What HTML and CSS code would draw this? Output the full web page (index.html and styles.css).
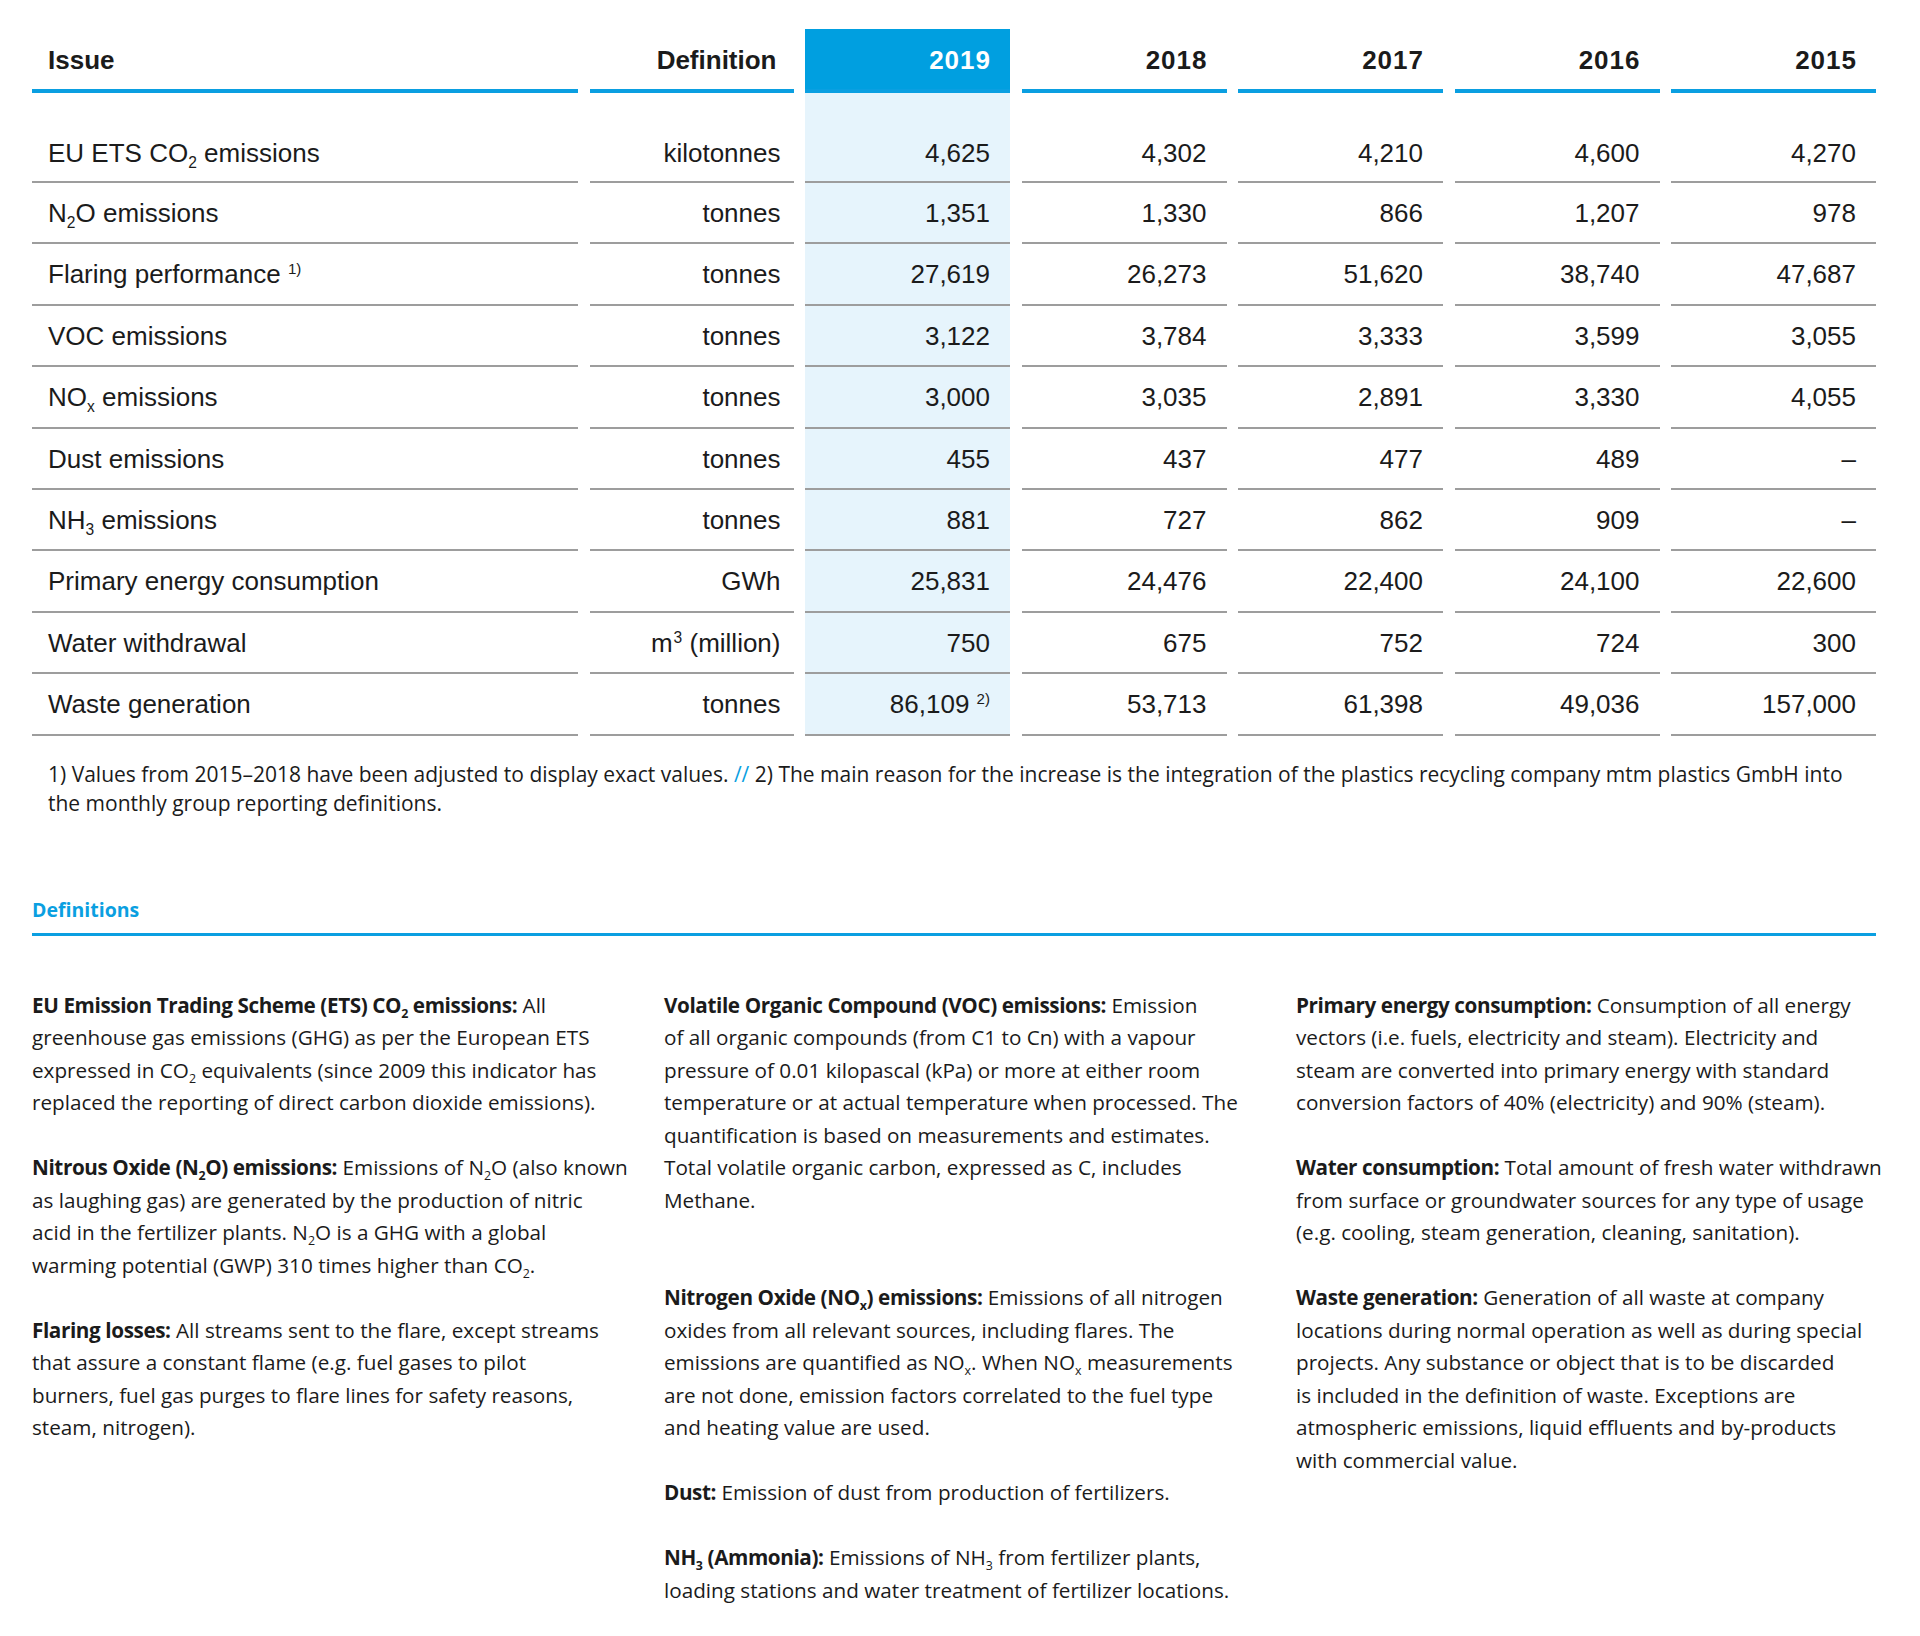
FILE: index.html
```html
<!DOCTYPE html>
<html lang="en">
<head>
<meta charset="utf-8">
<title>Environmental indicators</title>
<link rel="stylesheet" href="styles.css">
</head>
<body>
<div class="page">
  <div class="kpi">
    <div class="tr head">
      <div class="c issue">Issue</div>
      <div class="c def">Definition</div>
      <div class="c yr hl">2019</div>
      <div class="c yr">2018</div>
      <div class="c yr">2017</div>
      <div class="c yr">2016</div>
      <div class="c yr">2015</div>
    </div>
    <div class="tr first">
      <div class="c issue">EU ETS CO<span class="sub">2</span> emissions</div>
      <div class="c def">kilotonnes</div>
      <div class="c yr hl">4,625</div>
      <div class="c yr">4,302</div>
      <div class="c yr">4,210</div>
      <div class="c yr">4,600</div>
      <div class="c yr">4,270</div>
    </div>
    <div class="tr">
      <div class="c issue">N<span class="sub">2</span>O emissions</div>
      <div class="c def">tonnes</div>
      <div class="c yr hl">1,351</div>
      <div class="c yr">1,330</div>
      <div class="c yr">866</div>
      <div class="c yr">1,207</div>
      <div class="c yr">978</div>
    </div>
    <div class="tr">
      <div class="c issue">Flaring performance <span class="sup">1)</span></div>
      <div class="c def">tonnes</div>
      <div class="c yr hl">27,619</div>
      <div class="c yr">26,273</div>
      <div class="c yr">51,620</div>
      <div class="c yr">38,740</div>
      <div class="c yr">47,687</div>
    </div>
    <div class="tr">
      <div class="c issue">VOC emissions</div>
      <div class="c def">tonnes</div>
      <div class="c yr hl">3,122</div>
      <div class="c yr">3,784</div>
      <div class="c yr">3,333</div>
      <div class="c yr">3,599</div>
      <div class="c yr">3,055</div>
    </div>
    <div class="tr">
      <div class="c issue">NO<span class="sub">x</span> emissions</div>
      <div class="c def">tonnes</div>
      <div class="c yr hl">3,000</div>
      <div class="c yr">3,035</div>
      <div class="c yr">2,891</div>
      <div class="c yr">3,330</div>
      <div class="c yr">4,055</div>
    </div>
    <div class="tr">
      <div class="c issue">Dust emissions</div>
      <div class="c def">tonnes</div>
      <div class="c yr hl">455</div>
      <div class="c yr">437</div>
      <div class="c yr">477</div>
      <div class="c yr">489</div>
      <div class="c yr">–</div>
    </div>
    <div class="tr">
      <div class="c issue">NH<span class="sub">3</span> emissions</div>
      <div class="c def">tonnes</div>
      <div class="c yr hl">881</div>
      <div class="c yr">727</div>
      <div class="c yr">862</div>
      <div class="c yr">909</div>
      <div class="c yr">–</div>
    </div>
    <div class="tr">
      <div class="c issue">Primary energy consumption</div>
      <div class="c def">GWh</div>
      <div class="c yr hl">25,831</div>
      <div class="c yr">24,476</div>
      <div class="c yr">22,400</div>
      <div class="c yr">24,100</div>
      <div class="c yr">22,600</div>
    </div>
    <div class="tr">
      <div class="c issue">Water withdrawal</div>
      <div class="c def">m<span class="sup3">3</span> (million)</div>
      <div class="c yr hl">750</div>
      <div class="c yr">675</div>
      <div class="c yr">752</div>
      <div class="c yr">724</div>
      <div class="c yr">300</div>
    </div>
    <div class="tr">
      <div class="c issue">Waste generation</div>
      <div class="c def">tonnes</div>
      <div class="c yr hl">86,109 <span class="sup">2)</span></div>
      <div class="c yr">53,713</div>
      <div class="c yr">61,398</div>
      <div class="c yr">49,036</div>
      <div class="c yr">157,000</div>
    </div>
  </div>

  <p class="footnote">1) Values from 2015–2018 have been adjusted to display exact values. <span class="sep">//</span> 2) The main reason for the increase is the integration of the plastics recycling company mtm plastics GmbH into<br>the monthly group reporting definitions.</p>

  <h2 class="def-title">Definitions</h2>

  <div class="def-grid">
    <div class="def-col">
      <p><b>EU Emission Trading Scheme (ETS) CO<span class="sub">2</span> emissions:</b> All<br>greenhouse gas emissions (GHG) as per the European ETS<br>expressed in CO<span class="sub">2</span> equivalents (since 2009 this indicator has<br>replaced the reporting of direct carbon dioxide emissions).</p>
      <p><b>Nitrous Oxide (N<span class="sub">2</span>O) emissions:</b> Emissions of N<span class="sub">2</span>O (also known<br>as laughing gas) are generated by the production of nitric<br>acid in the fertilizer plants. N<span class="sub">2</span>O is a GHG with a global<br>warming potential (GWP) 310 times higher than CO<span class="sub">2</span>.</p>
      <p><b>Flaring losses:</b> All streams sent to the flare, except streams<br>that assure a constant flame (e.g. fuel gases to pilot<br>burners, fuel gas purges to flare lines for safety reasons,<br>steam, nitrogen).</p>
    </div>
    <div class="def-col">
      <p><b>Volatile Organic Compound (VOC) emissions:</b> Emission<br>of all organic compounds (from C1 to Cn) with a vapour<br>pressure of 0.01 kilopascal (kPa) or more at either room<br>temperature or at actual temperature when processed. The<br>quantification is based on measurements and estimates.<br>Total volatile organic carbon, expressed as C, includes<br>Methane.</p>
      <p class="wide-gap"><b>Nitrogen Oxide (NO<span class="sub">x</span>) emissions:</b> Emissions of all nitrogen<br>oxides from all relevant sources, including flares. The<br>emissions are quantified as NO<span class="sub">x</span>. When NO<span class="sub">x</span> measurements<br>are not done, emission factors correlated to the fuel type<br>and heating value are used.</p>
      <p><b>Dust:</b> Emission of dust from production of fertilizers.</p>
      <p><b>NH<span class="sub">3</span> (Ammonia):</b> Emissions of NH<span class="sub">3</span> from fertilizer plants,<br>loading stations and water treatment of fertilizer locations.</p>
    </div>
    <div class="def-col">
      <p><b>Primary energy consumption:</b> Consumption of all energy<br>vectors (i.e. fuels, electricity and steam). Electricity and<br>steam are converted into primary energy with standard<br>conversion factors of 40% (electricity) and 90% (steam).</p>
      <p><b>Water consumption:</b> Total amount of fresh water withdrawn<br>from surface or groundwater sources for any type of usage<br>(e.g. cooling, steam generation, cleaning, sanitation).</p>
      <p><b>Waste generation:</b> Generation of all waste at company<br>locations during normal operation as well as during special<br>projects. Any substance or object that is to be discarded<br>is included in the definition of waste. Exceptions are<br>atmospheric emissions, liquid effluents and by-products<br>with commercial value.</p>
    </div>
  </div>
</div>
</body>
</html>
```

FILE: styles.css
```css
html, body {
  margin: 0;
  padding: 0;
  background: #ffffff;
}

.page {
  width: 1844px;
  padding: 29px 44px 40px 32px;
  color: #1b1b1b;
}

/* ---------- KPI table ---------- */
.kpi {
  font-family: "Liberation Sans", Arial, sans-serif;
  font-size: 26px;
}

.tr {
  display: grid;
  grid-template-columns: 546px 204px repeat(5, minmax(0, 1fr));
  column-gap: 11.5px;
}

.c {
  white-space: nowrap;
  border-bottom: 2px solid #9d9d9d;
  padding-top: 2px;
  line-height: 57.4px;
}

.c.issue { padding-left: 16px; }
.c.def { text-align: right; padding-right: 13px; }
.c.yr { text-align: right; padding-right: 20px; }
.c.hl { background: #e6f4fc; }

.tr.head .c {
  font-weight: 700;
  border-bottom: 4px solid #0a9fe1;
  padding-top: 2px;
  line-height: 58px;
}
.tr.head .c.def { padding-right: 17px; }
.tr.head .c.yr {
  letter-spacing: 1px;
  padding-right: 19px;
}
.tr.head .c.hl {
  background: #009fe0;
  color: #ffffff;
}

.tr.first .c {
  padding-top: 32px;
  line-height: 56px;
}

.sub {
  font-size: 0.6em;
  vertical-align: -0.38em;
  line-height: 0;
}

.sup {
  font-size: 0.58em;
  vertical-align: 0.62em;
  line-height: 0;
}

.sup3 {
  font-size: 0.6em;
  vertical-align: 0.55em;
  line-height: 0;
  margin-left: 1px;
}

/* ---------- footnote ---------- */
.footnote {
  margin: 24px 0 0;
  padding: 0 16px;
  font-family: "Open Sans", "Liberation Sans", sans-serif;
  font-size: 21px;
  line-height: 29px;
  color: #1b1b1b;
  white-space: nowrap;
}
.footnote .sep { color: #0a9fe1; }

/* ---------- definitions ---------- */
.def-title {
  margin: 80px 0 0;
  padding-bottom: 11px;
  border-bottom: 3px solid #0a9fe1;
  font-family: "Open Sans", "Liberation Sans", sans-serif;
  font-size: 19.5px;
  line-height: 24px;
  font-weight: 700;
  color: #0a9fe1;
}

.def-grid {
  margin-top: 53px;
  display: grid;
  grid-template-columns: repeat(3, minmax(0, 1fr));
  column-gap: 52px;
  font-family: "Open Sans", "Liberation Sans", sans-serif;
  font-size: 20.7px;
  line-height: 32.5px;
  color: #1b1b1b;
}

.def-col p {
  margin: 0 0 32.5px;
  white-space: nowrap;
}

.def-col p.wide-gap { margin-top: 65px; }

.def-col b {
  font-weight: 700;
  letter-spacing: -0.4px;
}
```
